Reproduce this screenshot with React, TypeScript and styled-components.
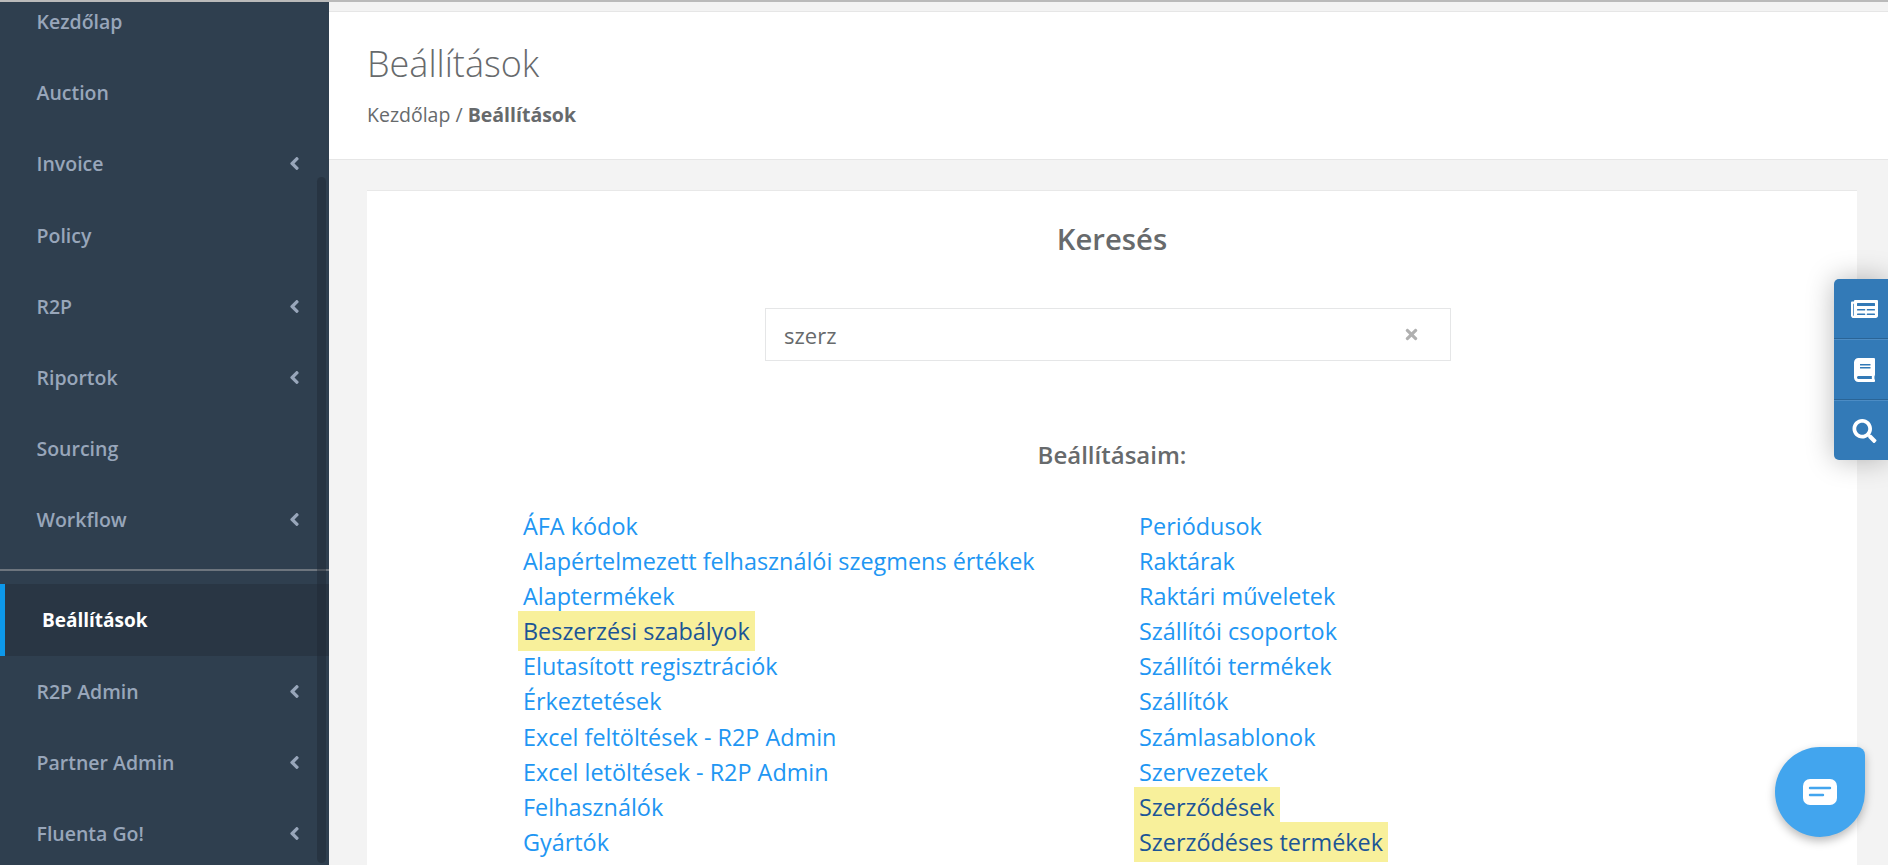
import styled, { createGlobalStyle } from 'styled-components'
import { FaAngleLeft, FaBook, FaNewspaper, FaSearch, FaTimes } from 'react-icons/fa'

interface NavEntry {
  label: string;
  expandable?: boolean;
}

const TOP_NAV: NavEntry[] = [
  { label: 'Kezdőlap' },
  { label: 'Auction' },
  { label: 'Invoice', expandable: true },
  { label: 'Policy' },
  { label: 'R2P', expandable: true },
  { label: 'Riportok', expandable: true },
  { label: 'Sourcing' },
  { label: 'Workflow', expandable: true },
]

const BOTTOM_NAV: NavEntry[] = [
  { label: 'R2P Admin', expandable: true },
  { label: 'Partner Admin', expandable: true },
  { label: 'Fluenta Go!', expandable: true },
]

const LEFT_LINKS = [
  'ÁFA kódok',
  'Alapértelmezett felhasználói szegmens értékek',
  'Alaptermékek',
  'Beszerzési szabályok',
  'Elutasított regisztrációk',
  'Érkeztetések',
  'Excel feltöltések - R2P Admin',
  'Excel letöltések - R2P Admin',
  'Felhasználók',
  'Gyártók',
]

const RIGHT_LINKS = [
  'Periódusok',
  'Raktárak',
  'Raktári műveletek',
  'Szállítói csoportok',
  'Szállítói termékek',
  'Szállítók',
  'Számlasablonok',
  'Szervezetek',
  'Szerződések',
  'Szerződéses termékek',
]

const GlobalStyle = createGlobalStyle`
  html, body {
    margin: 0;
    height: 100%;
    overflow: hidden;
    background: #f3f3f3;
    font-family: "Open Sans", "Noto Sans", sans-serif;
  }
`

const Page = styled.div`
  display: flex;
  flex-direction: column;
  height: 865px;
  overflow: hidden;
`

const TopStripe = styled.div`
  flex: none;
  height: 2px;
  background: #bababa;
`

const Body = styled.div`
  flex: 1;
  display: flex;
  min-height: 0;
`

const Sidebar = styled.aside`
  flex: none;
  position: relative;
  width: 329px;
  overflow: hidden;
  background: #2f3f4f;
`

const NavList = styled.nav`
  margin-top: -16px;
`

const NavRow = styled.div`
  display: flex;
  align-items: center;
  justify-content: space-between;
  height: 71.2px;
  padding: 0 26px 0 36.5px;
  font-size: 19.5px;
  font-weight: 600;
  color: #98a6ba;

  svg {
    width: 17px;
    height: 21px;
    color: #98a6ba;
  }
`

const Divider = styled.div`
  height: 2px;
  margin: 13px 0;
  background: #6d757e;
`

const ActiveRow = styled.div`
  display: flex;
  align-items: center;
  height: 72px;
  padding-left: 37px;
  border-left: 5px solid #0d98ea;
  background: #293644;
  font-size: 19px;
  font-weight: 700;
  color: #fff;
`

const ScrollThumb = styled.div`
  position: absolute;
  top: 175px;
  right: 3px;
  bottom: 2px;
  width: 9px;
  border-radius: 5px;
  background: rgba(30, 40, 50, 0.45);
`

const Main = styled.main`
  flex: 1;
  min-width: 0;
  padding-top: 9px;
`

const Header = styled.header`
  height: 149px;
  padding: 27px 38px 0;
  box-sizing: border-box;
  border-top: 1px solid #e6e6e6;
  border-bottom: 1px solid #e6e6e6;
  background: #fff;
  color: #676a6c;
`

const Title = styled.h1`
  margin: 0;
  font-size: 36px;
  line-height: 50px;
  font-weight: 300;
`

const Breadcrumb = styled.div`
  margin-top: 13px;
  font-size: 19.5px;
  line-height: 26px;

  strong {
    font-weight: 700;
  }
`

const Card = styled.section`
  margin: 30px 31px 0 38px;
  padding: 26px 0 60px;
  border-top: 1px solid #e8e8e8;
  background: #fff;
  color: #676a6c;
`

const SearchTitle = styled.h2`
  margin: 0;
  font-size: 29.25px;
  line-height: 44px;
  font-weight: 600;
  text-align: center;
`

const SearchBox = styled.div`
  display: flex;
  align-items: center;
  justify-content: space-between;
  width: 686px;
  height: 53px;
  margin: 47px 0 0 398px;
  padding: 0 30px 0 18px;
  box-sizing: border-box;
  border: 1px solid #e5e6e7;
  font-size: 22px;

  svg {
    width: 17px;
    height: 17px;
    color: #b0b0b0;
  }
`

const ListTitle = styled.h3`
  margin: 78px 0 0;
  font-size: 24px;
  line-height: 32px;
  font-weight: 600;
  text-align: center;
`

const Columns = styled.div`
  display: grid;
  grid-template-columns: 616px 1fr;
  margin: 38px 0 0 156px;
`

const LinkColumn = styled.ul`
  margin: 0;
  padding: 0;
  list-style: none;
`

const LinkItem = styled.li`
  height: 35.1px;
  font-size: 23.4px;
  line-height: 35.1px;
  white-space: nowrap;
  color: #2196f3;
`

const Match = styled.span`
  padding: 4px 5px;
  margin-left: -5px;
  background: #f8f09b;
  color: #1c5596;
`

const Toolbar = styled.div`
  position: fixed;
  top: 279px;
  right: 0;
  width: 54px;
  border-radius: 5px 0 0 5px;
  overflow: hidden;
  background: #337ab7;
  box-shadow: 0 0 28px rgba(0, 0, 0, 0.28);
`

const ToolbarButton = styled.div`
  display: flex;
  align-items: center;
  justify-content: center;
  height: 59px;
  padding-left: 7px;
  color: #fff;
  border-bottom: 1px solid #2a6496;
  border-top: 1px solid #4c8cc4;

  &:first-child {
    border-top: 0;
  }

  &:last-child {
    border-bottom: 0;
  }

  svg {
    width: 27px;
    height: 24px;
  }
`

const ChatButton = styled.div`
  position: fixed;
  left: 1775px;
  top: 747px;
  display: flex;
  align-items: center;
  justify-content: center;
  width: 90px;
  height: 90px;
  border-radius: 50% 8px 50% 50%;
  background: #42a5ee;
  box-shadow: 0 4px 10px rgba(0, 0, 0, 0.28);
`

const ChatIcon = () => (
  <svg width="34" height="26" viewBox="0 0 34 26" fill="none">
    <rect width="34" height="26" rx="7" fill="#fff" />
    <path d="M7 9h20M7 16h13" stroke="#42a5ee" strokeWidth="2.4" strokeLinecap="round" />
  </svg>
)

const NavItem = ({ label, expandable }: NavEntry) => (
  <NavRow>
    {label}
    {expandable && <FaAngleLeft />}
  </NavRow>
)

const LinkRow = ({ text }: { text: string }) => (
  <LinkItem>
    {text.toLowerCase().includes('szerz') ? <Match>{text}</Match> : text}
  </LinkItem>
)

const App = () => (
  <Page>
    <GlobalStyle />
    <TopStripe />
    <Body>
      <Sidebar>
        <NavList>
          {TOP_NAV.map((entry) => <NavItem key={entry.label} {...entry} />)}
          <Divider />
          <ActiveRow>Beállítások</ActiveRow>
          {BOTTOM_NAV.map((entry) => <NavItem key={entry.label} {...entry} />)}
        </NavList>
        <ScrollThumb />
      </Sidebar>

      <Main>
        <Header>
          <Title>Beállítások</Title>
          <Breadcrumb>Kezdőlap / <strong>Beállítások</strong></Breadcrumb>
        </Header>

        <Card>
          <SearchTitle>Keresés</SearchTitle>
          <SearchBox>
            szerz
            <FaTimes />
          </SearchBox>
          <ListTitle>Beállításaim:</ListTitle>
          <Columns>
            <LinkColumn>
              {LEFT_LINKS.map((text) => <LinkRow key={text} text={text} />)}
            </LinkColumn>
            <LinkColumn>
              {RIGHT_LINKS.map((text) => <LinkRow key={text} text={text} />)}
            </LinkColumn>
          </Columns>
        </Card>
      </Main>
    </Body>

    <Toolbar>
      <ToolbarButton><FaNewspaper /></ToolbarButton>
      <ToolbarButton><FaBook /></ToolbarButton>
      <ToolbarButton><FaSearch /></ToolbarButton>
    </Toolbar>

    <ChatButton><ChatIcon /></ChatButton>
  </Page>
)

export default App
